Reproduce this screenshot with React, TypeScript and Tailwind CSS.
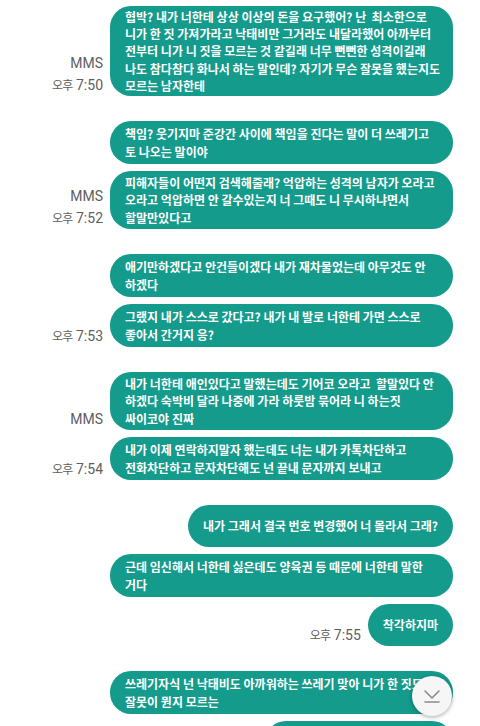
import { ReactNode } from 'react'

type Msg = {
  lines: string[]
  mms?: boolean
  time?: string
  width?: string
}

// each group is a run of sent messages, the last one gets the time
const groups: Msg[][] = [
  [
    {
      lines: [
        '협박? 내가 너한테 상상 이상의 돈을 요구했어? 난  최소한으로',
        '니가 한 짓 가져가라고 낙태비만 그거라도 내달라했어 아까부터',
        '전부터 니가 니 짓을 모르는 것 같길래 너무 뻔뻔한 성격이길래',
        '나도 참다참다 화나서 하는 말인데? 자기가 무슨 잘못을 했는지도',
        '모르는 남자한테',
      ],
      mms: true,
      time: '7:50',
    },
  ],
  [
    { lines: ['책임? 웃기지마 준강간 사이에 책임을 진다는 말이 더 쓰레기고', '토 나오는 말이야'] },
    {
      lines: [
        '피해자들이 어떤지 검색해줄래? 억압하는 성격의 남자가 오라고',
        '오라고 억압하면 안 갈수있는지 너 그때도 니 무시하냐면서',
        '할말만있다고',
      ],
      mms: true,
      time: '7:52',
    },
  ],
  [
    { lines: ['애기만하겠다고 안건들이겠다 내가 재차물었는데 아무것도 안', '하겠다'] },
    { lines: ['그랬지 내가 스스로 갔다고? 내가 내 발로 너한테 가면 스스로', '좋아서 간거지 응?'], time: '7:53' },
  ],
  [
    {
      lines: [
        '내가 너한테 애인있다고 말했는데도 기어코 오라고  할말있다 안',
        '하겠다 숙박비 달라 나중에 가라 하룻밤 묶어라 니 하는짓',
        '싸이코야 진짜',
      ],
      mms: true,
    },
    {
      lines: ['내가 이제 연락하지말자 했는데도 너는 내가 카톡차단하고', '전화차단하고 문자차단해도 넌 끝내 문자까지 보내고'],
      time: '7:54',
    },
  ],
  [
    { lines: ['내가 그래서 결국 번호 변경했어 너 몰라서 그래?'] },
    { lines: ['근데 임신해서 너한테 싫은데도 양육권 등 때문에 너한테 말한', '거다'] },
    { lines: ['착각하지마'], time: '7:55' },
  ],
  [
    { lines: ['쓰레기자식 넌 낙태비도 아까워하는 쓰레기 맞아 니가 한 짓도', '잘못이 뭔지 모르는'] },
    { lines: [''], width: 'w-[188px]' },
  ],
]

function Meta({ mms, time }: { mms?: boolean; time?: string }) {
  if (!mms && !time) return null
  return (
    <div className="flex flex-col items-end text-[14px] leading-[21px] text-[#5e5e5e] font-['Roboto','Noto_Sans_CJK_KR',sans-serif] whitespace-nowrap">
      {mms && <span>MMS</span>}
      {time && (
        <span>
          <span className="text-[12px] tracking-[-0.8px] font-['Noto_Sans_CJK_KR',sans-serif]">오후</span> {time}
        </span>
      )}
    </div>
  )
}

function Bubble({ msg }: { msg: Msg }) {
  const n = msg.lines.length
  const minH = n >= 5 ? 'min-h-[90px]' : n === 3 ? 'min-h-[58px]' : n === 2 ? 'min-h-[43px]' : 'min-h-[42px]'
  return (
    <div className="flex justify-end items-end gap-[7px]">
      <Meta mms={msg.mms} time={msg.time} />
      <div
        className={`${n > 1 ? 'w-[343px]' : ''} ${msg.width ?? ''} ${minH} flex flex-col justify-center rounded-[21px] bg-[#149b8c] px-[15px] py-[1.5px] text-white text-[12px] leading-[17.4px] font-bold font-['Noto_Sans_CJK_KR',sans-serif]`}
      >
        {msg.lines.map((l, i) => (
          <div key={i} className="whitespace-pre">
            {l}
          </div>
        ))}
      </div>
    </div>
  )
}

function ScrollDown(): ReactNode {
  return (
    <button className="absolute left-[412px] top-[676px] w-[40px] h-[40px] rounded-full bg-[#f6f6f6] shadow-[0_1px_4px_rgba(0,0,0,0.35)] flex items-center justify-center">
      <svg width="20" height="20" viewBox="0 0 20 20" fill="none" stroke="#8b8b8b" strokeWidth="1.6" strokeLinecap="round" strokeLinejoin="round">
        <polyline points="3,5 10,12 17,5" />
        <line x1="3" y1="16" x2="17" y2="16" />
      </svg>
    </button>
  )
}

export default function App() {
  return (
    <div className="relative h-[726px] w-[480px] overflow-hidden bg-white">
      <div className="flex flex-col gap-[25px] pt-[6px] pr-[27px]">
        {groups.map((g, gi) => (
          <div key={gi} className="flex flex-col gap-[7px]">
            {g.map((m, mi) => (
              <Bubble key={mi} msg={m} />
            ))}
          </div>
        ))}
      </div>
      <ScrollDown />
    </div>
  )
}
